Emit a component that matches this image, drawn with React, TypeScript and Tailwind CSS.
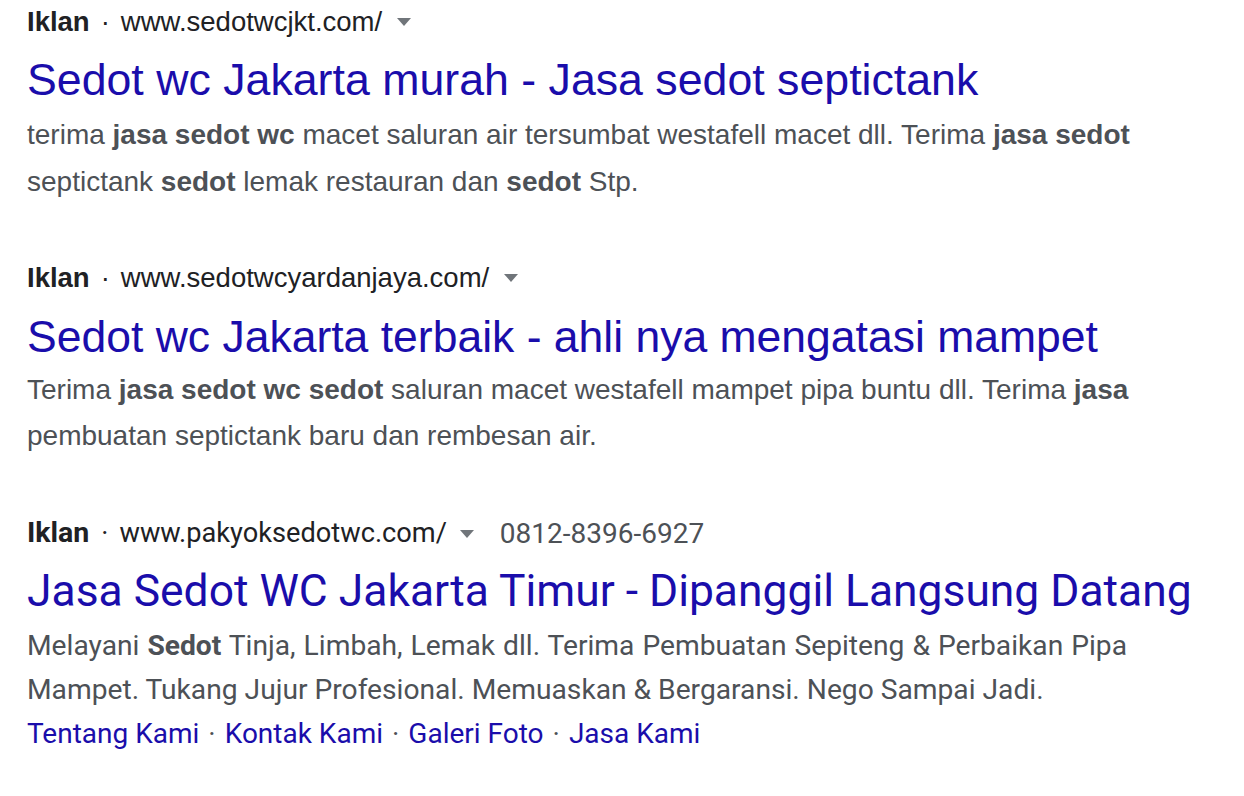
import React from "react";

const Tri = () => (
  <svg width="14" height="8" viewBox="0 0 14 8" className="inline-block">
    <path d="M0 0 L14 0 L7 8 Z" fill="#70757a" />
  </svg>
);

const B = ({ children }: { children: React.ReactNode }) => (
  <span className="font-bold">{children}</span>
);

const Sep = () => <span className="mx-[9px] text-[#4d5156]">·</span>;

export default function App() {
  return (
    <div className="w-[1244px] h-[796px] bg-white overflow-hidden pl-[27px] pt-[2px]">
      {/* Ad 1 */}
      <div className="font-['Liberation_Sans',Arial,sans-serif]">
        <div className="flex items-center h-[40px] text-[27.5px] text-[#202124] whitespace-nowrap">
          <span className="font-bold">Iklan</span>
          <span className="mx-[11px]">·</span>
          <span>www.sedotwcjkt.com/</span>
          <span className="ml-[15px] flex items-center"><Tri /></span>
        </div>
        <div className="mt-[12px] h-[52px] leading-[52px] text-[44.7px] text-[#1a0dab] whitespace-nowrap">
          Sedot wc Jakarta murah - Jasa sedot septictank
        </div>
        <div className="mt-[4.5px] text-[28px] leading-[47px] text-[#4d5156] whitespace-nowrap">
          <div>terima <B>jasa sedot wc</B> macet saluran air tersumbat westafell macet dll. Terima <B>jasa sedot</B></div>
          <div>septictank <B>sedot</B> lemak restauran dan <B>sedot</B> Stp.</div>
        </div>
      </div>

      {/* Ad 2 */}
      <div className="mt-[53px] font-['Liberation_Sans',Arial,sans-serif]">
        <div className="flex items-center h-[40px] text-[27.5px] text-[#202124] whitespace-nowrap">
          <span className="font-bold">Iklan</span>
          <span className="mx-[11px]">·</span>
          <span>www.sedotwcyardanjaya.com/</span>
          <span className="ml-[15px] flex items-center"><Tri /></span>
        </div>
        <div className="mt-[13px] h-[52px] leading-[52px] text-[44.5px] text-[#1a0dab] whitespace-nowrap">
          Sedot wc Jakarta terbaik - ahli nya mengatasi mampet
        </div>
        <div className="mt-[4px] text-[28px] leading-[46px] text-[#4d5156] whitespace-nowrap">
          <div>Terima <B>jasa sedot wc sedot</B> saluran macet westafell mampet pipa buntu dll. Terima <B>jasa</B></div>
          <div>pembuatan septictank baru dan rembesan air.</div>
        </div>
      </div>

      {/* Ad 3 */}
      <div className="mt-[55px] font-['Roboto',Arial,sans-serif]">
        <div className="flex items-center h-[40px] text-[27.2px] text-[#202124] whitespace-nowrap">
          <span className="font-bold text-[28.5px]">Iklan</span>
          <span className="ml-[12px] mr-[11px]">·</span>
          <span>www.pakyoksedotwc.com/</span>
          <span className="ml-[13px] flex items-center"><Tri /></span>
          <span className="ml-[26px] text-[#4d5156] text-[28px]">0812-8396-6927</span>
        </div>
        <div className="mt-[11px] h-[52px] leading-[52px] text-[44.4px] text-[#1a0dab] whitespace-nowrap">
          Jasa Sedot WC Jakarta Timur - Dipanggil Langsung Datang
        </div>
        <div className="mt-[7px] text-[28.2px] leading-[44px] text-[#4d5156] whitespace-nowrap">
          <div className="[word-spacing:1px]">Melayani <B>Sedot</B> Tinja, Limbah, Lemak dll. Terima Pembuatan Sepiteng &amp; Perbaikan Pipa</div>
          <div>Mampet. Tukang Jujur Profesional. Memuaskan &amp; Bergaransi. Nego Sampai Jadi.</div>
          <div className="text-[#1a0dab] text-[28px]">
            Tentang Kami<Sep />Kontak Kami<Sep />Galeri Foto<Sep />Jasa Kami
          </div>
        </div>
      </div>
    </div>
  );
}
